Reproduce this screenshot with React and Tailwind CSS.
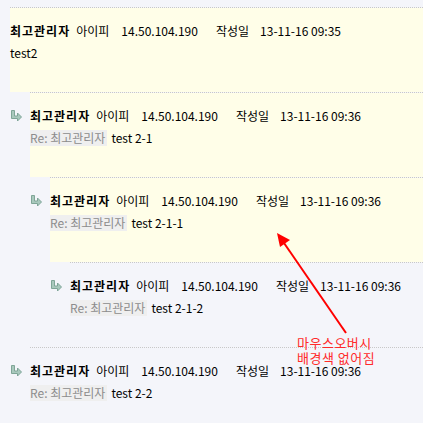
import React from 'react';

const comments = [
  { id: 1, depth: 0, date: '13-11-16 09:35', body: 'test2', re: false, hover: true },
  { id: 2, depth: 1, date: '13-11-16 09:36', body: 'test 2-1', re: true, hover: true },
  { id: 3, depth: 2, date: '13-11-16 09:36', body: 'test 2-1-1', re: true, hover: true },
  { id: 4, depth: 3, date: '13-11-16 09:36', body: 'test 2-1-2', re: true, hover: false },
  { id: 5, depth: 1, date: '13-11-16 09:36', body: 'test 2-2', re: true, hover: false },
];

const indent = ['ml-[10px]', 'ml-[30px]', 'ml-[50px]', 'ml-[70px]'];

const ReplyArrow = () => (
  <svg width="12" height="12" viewBox="0 0 12 12" className="block">
    <path
      d="M1.5 0.5 H4.5 V6 H7.5 V3 L11.5 7 L7.5 11 V8.5 H1.5 Z"
      fill="#a9c9bd"
      stroke="#7fa597"
      strokeWidth="1"
      strokeLinejoin="round"
    />
  </svg>
);

const Comment = ({ c }) => (
  <div className={`${indent[c.depth]} border-t border-dotted border-[#c8c8c8]`}>
    <div className={`h-[84px] pt-[15px] ${c.hover ? 'bg-[#fffee8]' : ''}`}>
      <div className={`flex items-center h-4 whitespace-nowrap ${c.depth > 0 ? '-ml-[20px]' : ''}`}>
        {c.depth > 0 && (
          <span className="w-[20px] flex items-center">
            <ReplyArrow />
          </span>
        )}
        <span className="font-bold tracking-[1px]">최고관리자</span>
        <span className="ml-[6px]">아이피</span>
        <span className="ml-[12px]">14.50.104.190</span>
        <span className="ml-[18px]">작성일</span>
        <span className="ml-[11px]">{c.date}</span>
      </div>
      <div className="mt-[6px] h-4 flex items-center whitespace-nowrap">
        {c.re && <span className="bg-[#efefef] text-[#8c8c8c] pr-[2px]">Re: 최고관리자</span>}
        <span className={c.re ? 'ml-[4px]' : ''}>{c.body}</span>
      </div>
    </div>
  </div>
);

export default function App() {
  return (
    <div
      className="relative w-[423px] h-[423px] overflow-hidden bg-[#f4f5fa] pt-[7px] text-[12px] leading-4 text-black"
      style={{ fontFamily: '"Noto Sans CJK KR", "Noto Sans", sans-serif' }}
    >
      {comments.map(c => (
        <Comment key={c.id} c={c} />
      ))}

      <svg className="absolute left-0 top-0" width="423" height="423">
        <line x1="346" y1="333" x2="284" y2="243" stroke="#ff0000" strokeWidth="2" />
        <polygon points="277,233 290,240 280,247" fill="#ff0000" />
      </svg>
      <div className="absolute left-[297px] top-[335px] text-[#ff2a2a] text-[13px] leading-[15px] tracking-[0.5px]">
        <div>마우스오버시</div>
        <div>배경색 없어짐</div>
      </div>
    </div>
  );
}
